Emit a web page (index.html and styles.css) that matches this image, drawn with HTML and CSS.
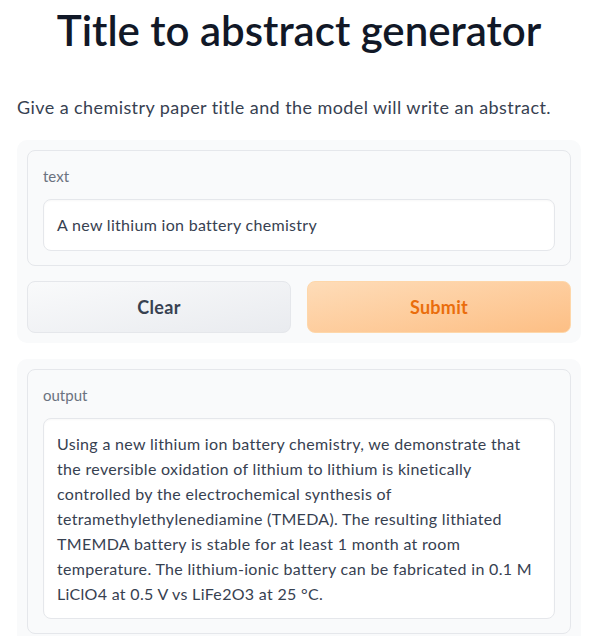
FILE: index.html
```html
<!DOCTYPE html>
<html>
<head>
<meta charset="utf-8">
<link rel="stylesheet" href="styles.css">
</head>
<body>
<div class="app">
  <h1 class="title">Title to abstract generator</h1>
  <p class="desc">Give a chemistry paper title and the model will write an abstract.</p>
  <div class="panel">
    <div class="block">
      <div class="label">text</div>
      <div class="field">A new lithium ion battery chemistry</div>
    </div>
    <div class="buttons">
      <button class="btn btn-clear">Clear</button>
      <button class="btn btn-submit">Submit</button>
    </div>
  </div>
  <div class="panel panel-out">
    <div class="block">
      <div class="label">output</div>
      <div class="field field-out">Using a new lithium ion battery chemistry, we demonstrate that the reversible oxidation of lithium to lithium is kinetically controlled by the electrochemical synthesis of tetramethylethylenediamine (TMEDA). The resulting lithiated TMEMDA battery is stable for at least 1 month at room temperature. The lithium-ionic battery can be fabricated in 0.1 M LiClO4 at 0.5 V vs LiFe2O3 at 25 °C.</div>
    </div>
  </div>
</div>
</body>
</html>
```

FILE: styles.css
```css
* { box-sizing: border-box; }
html, body { margin: 0; padding: 0; background: #ffffff; }
body { font-family: "Lato", "Noto Sans", sans-serif; color: #374151; overflow: hidden; }
.app { padding: 0 17px; width: 598px; }
.title {
  margin: 0;
  padding-top: 5px;
  font-size: 42px;
  line-height: 50px;
  font-weight: 600;
  color: #111827;
  text-align: center;
}
.desc {
  margin: 40px 0 0 0;
  font-size: 18px;
  line-height: 24px;
  letter-spacing: 0.42px;
  color: #374151;
}
.panel {
  margin-top: 21px;
  background: #f9fafb;
  border-radius: 10px;
  padding: 10px;
}
.panel-out { margin-top: 16px; padding-bottom: 12px; }
.block {
  border: 1px solid #e5e7eb;
  border-radius: 8px;
  background: #f9fafb;
  padding: 15px 15px 14px 15px;
}
.label {
  font-size: 15px;
  line-height: 20px;
  color: #6b7280;
  margin-bottom: 13px;
}
.field {
  background: #ffffff;
  border: 1px solid #e5e7eb;
  border-radius: 8px;
  padding: 13px 13px;
  height: 52px;
  font-size: 16px;
  line-height: 24px;
  letter-spacing: 0.3px;
  color: #374151;
  box-shadow: inset 0 1px 2px rgba(0,0,0,0.03);
}
.field-out {
  height: auto;
  padding: 12px 21px 12px 13px;
  line-height: 25px;
  letter-spacing: 0.32px;
}
.buttons {
  display: grid;
  grid-template-columns: 1fr 1fr;
  gap: 16px;
  margin-top: 15px;
}
.btn {
  height: 52px;
  border-radius: 8px;
  font-family: inherit;
  font-size: 18px;
  font-weight: 700;
  letter-spacing: 0.3px;
  cursor: pointer;
}
.btn-clear {
  background: linear-gradient(to bottom right, #f9fafb, #e9ebef);
  border: 1px solid #e5e7eb;
  color: #374151;
}
.btn-submit {
  background: linear-gradient(to bottom right, #fedcb8, #fdbf85);
  border: 1px solid #fed7aa;
  color: #ea6d0c;
}
```
